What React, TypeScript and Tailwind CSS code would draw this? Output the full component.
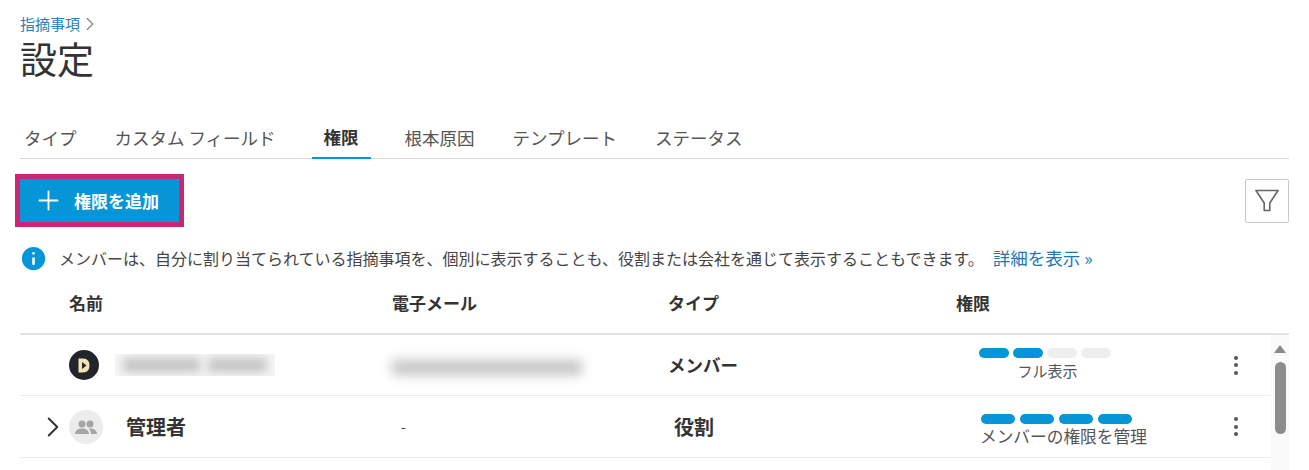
import { Plus, ChevronRight, Info } from 'lucide-react'

const font = { fontFamily: '"Noto Sans CJK JP", "Liberation Sans", sans-serif' }

const tabs = [
  { label: 'タイプ', cls: 'ml-[4px] mr-[38px]' },
  { label: 'カスタム フィールド', cls: 'mr-[36px]' },
  { label: '権限', cls: 'px-3 mr-[34px] text-[#333] font-bold border-b-2 border-[#0696d7]' },
  { label: '根本原因', cls: 'mr-[38px]' },
  { label: 'テンプレート', cls: 'mr-[38px]' },
  { label: 'ステータス', cls: '' },
]

function Bars({ filled, total, width, gap }: { filled: number; total: number; width: string; gap: string }) {
  return (
    <div className={`flex ${gap}`}>
      {Array.from({ length: total }).map((_, i) => (
        <span
          key={i}
          className={`h-2.5 rounded-full ${width} ${i < filled ? 'bg-[#0696d7]' : 'bg-[#eeeeee]'}`}
        />
      ))}
    </div>
  )
}

function Dots() {
  return (
    <div className="flex flex-col gap-[3.5px] items-center">
      <span className="w-1 h-1 rounded-full bg-[#555]" />
      <span className="w-1 h-1 rounded-full bg-[#555]" />
      <span className="w-1 h-1 rounded-full bg-[#555]" />
    </div>
  )
}

export default function App() {
  return (
    <div style={font} className="w-[1309px] h-[470px] overflow-hidden bg-white px-5 pt-[14px] text-[#3c3c3c]">
      <div className="flex items-center h-5 text-[15px] text-[#2b7fb8] leading-5">
        指摘事項
        <ChevronRight className="w-[22px] h-[22px] text-[#808080] -ml-[1px]" strokeWidth={1.25} />
      </div>
      <h1 className="text-[37px] leading-[38px] mt-[5px] font-normal text-[#333]">設定</h1>

      <div className="flex mt-[42px] h-[40px] border-b border-[#d9d9d9] text-[17.5px] text-[#555]">
        {tabs.map(t => (
          <div key={t.label} className={`h-[40px] pb-[2px] flex items-center whitespace-nowrap ${t.cls}`}>
            {t.label}
          </div>
        ))}
      </div>

      <div className="flex items-center justify-between mt-[15px]">
        <div className="border-[5px] border-[#c92674] -ml-[5px]">
          <button className="flex items-center w-[159px] h-[43px] bg-[#0696d7] pl-[13px] text-white text-[17px] font-bold">
            <Plus className="w-[31px] h-[31px]" strokeWidth={1.4} />
            <span className="ml-[10px]">権限を追加</span>
          </button>
        </div>
        <button className="w-[44px] h-[44px] border border-[#c8c8c8] rounded-[2px] flex items-center justify-center">
          <svg viewBox="0 0 24 23" className="w-[24px] h-[23px] text-[#666]" fill="none" stroke="currentColor" strokeWidth="1.6" strokeLinejoin="round">
            <path d="M1 1.5h22L14.8 14v7.5H9.2V14z" />
          </svg>
        </button>
      </div>

      <div className="flex items-center mt-[18px] h-[26px] text-[16px] text-[#444] whitespace-nowrap">
        <Info className="w-[31px] h-[31px] -ml-[2px] text-white fill-[#0696d7]" strokeWidth={2} />
        <span className="ml-[10px]">メンバーは、自分に割り当てられている指摘事項を、個別に表示することも、役割または会社を通じて表示することもできます。</span>
        <span className="ml-[9px] text-[17.5px] text-[#1b78b3]">詳細を表示 »</span>
      </div>

      <div className="relative mt-[4px]">
        <div className="grid grid-cols-[323px_276px_288px_1fr] h-[60px] pb-[2px] items-center pl-[49px] border-b-2 border-[#e3e3e3] text-[17px] font-bold text-[#333]">
          <div>名前</div>
          <div>電子メール</div>
          <div>タイプ</div>
          <div>権限</div>
        </div>

        <div className="flex">
          <div className="flex-1">
            <div className="grid grid-cols-[323px_276px_288px_1fr] h-[61px] items-center pl-[49px] border-b border-[#ececec]">
              <div className="flex items-center">
                <div className="w-[30px] h-[30px] rounded-full bg-[#22252b] flex items-center justify-center">
                  <svg viewBox="0 0 14 16" className="w-[14px] h-[17px]">
                    <path d="M1.5 1h4.5c4.5 0 6.5 3 6.5 7s-2 7-6.5 7H1.5z" fill="#f2e3b8" />
                    <path d="M5 4.5l4.5 3.5L5 11.5z" fill="#22252b" />
                  </svg>
                </div>
                <div className="ml-4 w-[160px] h-[22px] bg-[#f6f6f6] overflow-hidden flex items-center gap-2 px-2">
                  <div className="w-[78px] h-3.5 bg-[#c4c4c4] blur-[5px]" />
                  <div className="w-[60px] h-3.5 bg-[#c4c4c4] blur-[5px]" />
                </div>
              </div>
              <div className="w-[190px] h-[30px] mt-[4px] flex items-center">
                <div className="w-full h-[15px] bg-[#c4c4c4] blur-[6px]" />
              </div>
              <div className="text-[17.5px] font-bold text-[#333]">メンバー</div>
              <div className="flex items-center">
                <div className="w-[134px] ml-[22px] -mt-[2px] flex flex-col items-center">
                  <Bars filled={2} total={4} width="w-[30px]" gap="gap-[4px]" />
                  <div className="text-[15px] leading-[18px] mt-[4px] text-[#555] ml-[5px]">フル表示</div>
                </div>
                <div className="ml-auto mr-[33px]"><Dots /></div>
              </div>
            </div>

            <div className="grid grid-cols-[323px_276px_288px_1fr] h-[62px] items-center pl-[49px] border-b border-[#ececec]">
              <div className="flex items-center relative">
                <ChevronRight className="absolute -left-[33px] w-[34px] h-[34px] text-[#333]" strokeWidth={1.4} />
                <div className="w-[34px] h-[34px] rounded-full bg-[#ececec] flex items-center justify-center text-[#a5a5a5]">
                  <svg viewBox="0 0 24 24" className="w-[24px] h-[24px]" fill="currentColor">
                    <circle cx="8" cy="9" r="3.5" />
                    <circle cx="16" cy="9" r="3.5" />
                    <path d="M1 19c0-3.5 3-5.5 7-5.5s7 2 7 5.5z" />
                    <path d="M16 13.5c4 0 7 2 7 5.5h-6c0-2-.5-4-2.5-5.4z" />
                  </svg>
                </div>
                <span className="ml-[23px] text-[20px] font-bold text-[#333]">管理者</span>
              </div>
              <div className="pl-[9px] text-[14px]">-</div>
              <div className="pl-[6px] text-[20px] font-bold text-[#333]">役割</div>
              <div className="flex items-center">
                <div className="ml-[25px] mt-[3px] flex flex-col">
                  <Bars filled={4} total={4} width="w-[34px]" gap="gap-[5px]" />
                  <div className="text-[16.7px] leading-[14px] mt-[5px] -ml-[1px] text-[#555] whitespace-nowrap">メンバーの権限を管理</div>
                </div>
                <div className="ml-auto mr-[33px]"><Dots /></div>
              </div>
            </div>
          </div>

          <div className="w-[18px] h-[140px] bg-[#fafafa] flex flex-col items-center pt-[10px]">
            <span className="w-0 h-0 border-x-[6px] border-x-transparent border-b-[8px] border-b-[#888]" />
            <span className="w-[11px] h-[72px] mt-[9px] rounded-full bg-[#8c8c8c]" />
          </div>
        </div>
      </div>
    </div>
  )
}
